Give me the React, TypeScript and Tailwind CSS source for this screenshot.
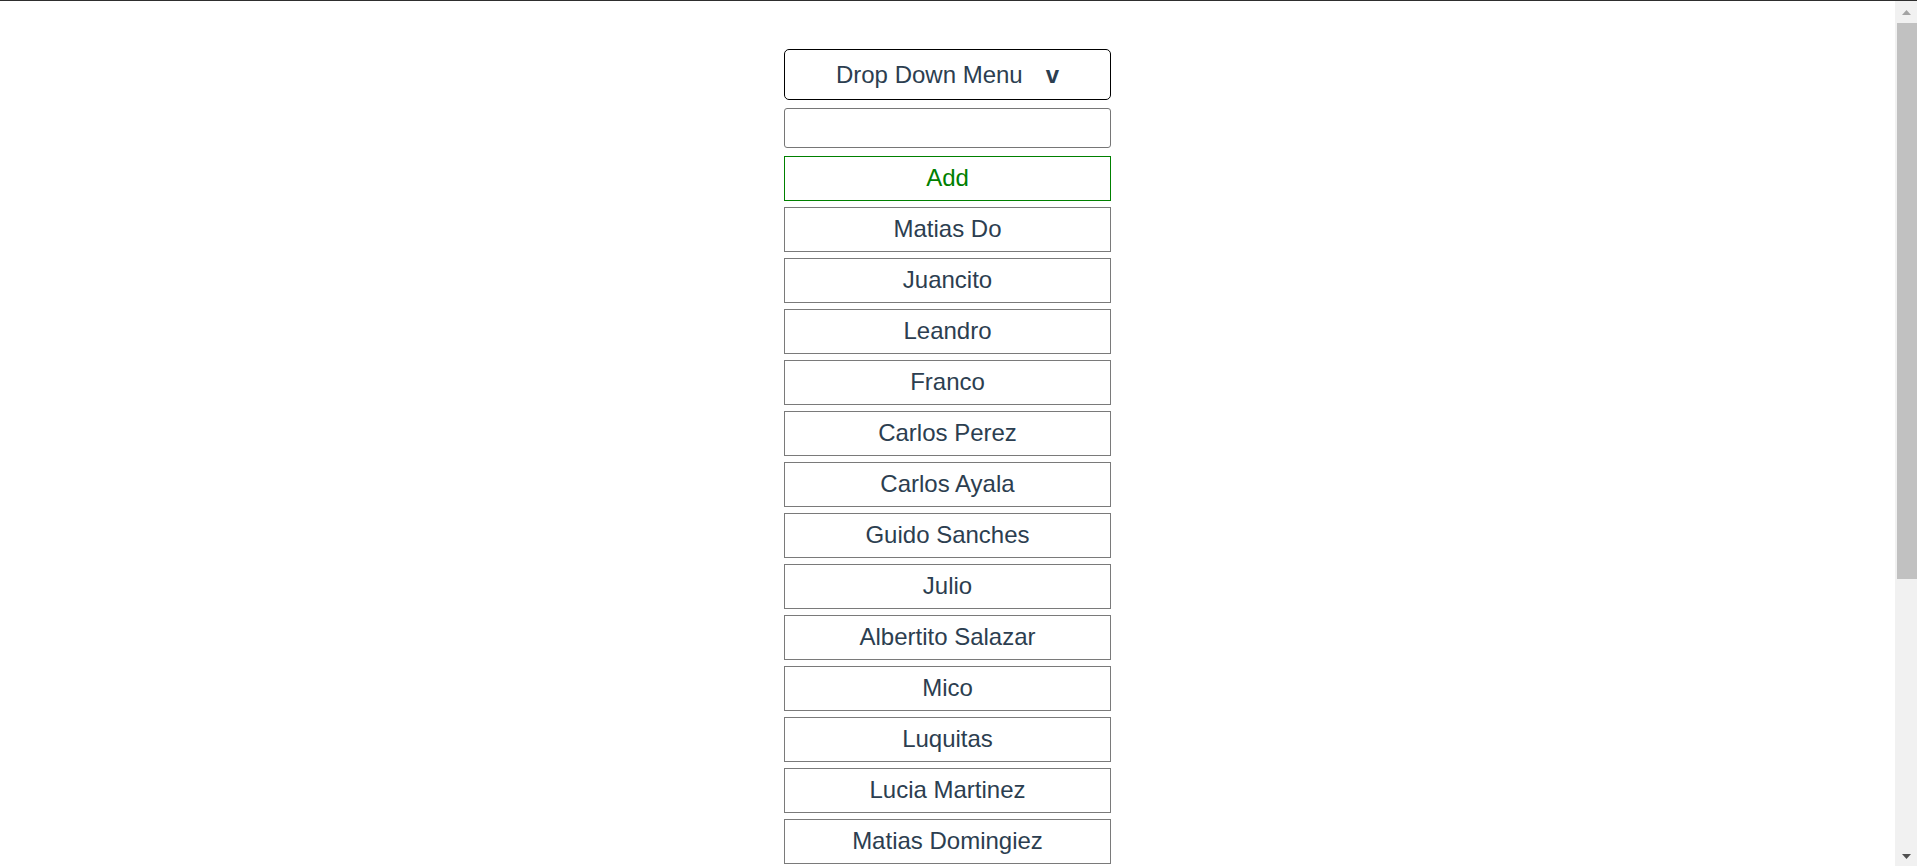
import React from "react";

const names = [
  "Matias Do",
  "Juancito",
  "Leandro",
  "Franco",
  "Carlos Perez",
  "Carlos Ayala",
  "Guido Sanches",
  "Julio",
  "Albertito Salazar",
  "Mico",
  "Luquitas",
  "Lucia Martinez",
  "Matias Domingiez",
];

const App: React.FC = () => {
  return (
    <div
      className="h-[866px] w-full overflow-hidden flex flex-col bg-white"
      style={{ fontFamily: '"Liberation Sans", Arial, Helvetica, sans-serif' }}
    >
      {/* thin top edge */}
      <div className="h-px bg-[#2e2e2e] shrink-0" />
      <div className="flex flex-1 min-h-0">
        <main className="flex-1 overflow-hidden">
          <div className="mx-auto w-[327px] pt-[48px] flex flex-col text-[24px] text-[#2c3e50]">
            {/* Dropdown toggle */}
            <button className="h-[51px] border border-black rounded-[5px] flex items-center justify-center bg-white">
              <span>Drop Down Menu</span>
              <span className="ml-[23px] font-bold">v</span>
            </button>
            {/* New name input */}
            <input
              type="text"
              className="mt-[8px] h-[40px] border border-[#767676] rounded-[3px] px-2 outline-none"
            />
            <button className="mt-[8px] h-[44.5px] border border-[#008000] text-[#008000] flex items-center justify-center bg-white">
              Add
            </button>
            {/* Name list */}
            {names.map((name) => (
              <div
                key={name}
                className="mt-[6px] h-[45px] border border-[#7a7a7a] flex items-center justify-center shrink-0"
              >
                {name}
              </div>
            ))}
          </div>
        </main>
        {/* Scrollbar */}
        <aside className="w-[22px] shrink-0 bg-[#f1f1f1] flex flex-col">
          <div className="h-[22px] flex items-center justify-center">
            <svg width="9" height="5" viewBox="0 0 9 5">
              <polygon points="0,5 4.5,0 9,5" fill="#a3a3a3" />
            </svg>
          </div>
          <div className="h-[556px] pl-[2px]">
            <div className="h-full bg-[#c1c1c1]" />
          </div>
          <div className="flex-1" />
          <div className="h-[20px] flex items-center justify-center">
            <svg width="9" height="5" viewBox="0 0 9 5">
              <polygon points="0,0 9,0 4.5,5" fill="#505050" />
            </svg>
          </div>
        </aside>
      </div>
    </div>
  );
};

export default App;
